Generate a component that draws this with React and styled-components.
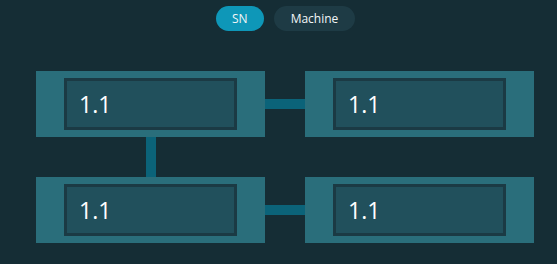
import React, { useState } from 'react';
import styled, { createGlobalStyle } from 'styled-components';

const GlobalStyle = createGlobalStyle`
    html, body {
        margin: 0;
        background: #152d35;
        font-family: "Open Sans", "Noto Sans", sans-serif;
    }
`;

const __nodes = ['1.1', '1.1', '1.1', '1.1'];

const App = () => {
    const [mode, setMode] = useState('SN');

    return (<Page>
        <GlobalStyle />
        <Toolbar>
            <Pill active={mode === 'SN'} onClick={() => setMode('SN')}>SN</Pill>
            <Pill active={mode === 'Machine'} onClick={() => setMode('Machine')}>Machine</Pill>
        </Toolbar>
        <Board>
            <Node><Label>{__nodes[0]}</Label></Node>
            <Cell><HLink /></Cell>
            <Node><Label>{__nodes[1]}</Label></Node>
            <Cell><VLink /></Cell>
            <Cell />
            <Cell />
            <Node><Label>{__nodes[2]}</Label></Node>
            <Cell><HLink /></Cell>
            <Node><Label>{__nodes[3]}</Label></Node>
        </Board>
    </Page>)
}

const Page = styled.div`
    display:flex;
    flex-direction:column;
    width:557px;
    height:264px;
    overflow:hidden;
`;

const Toolbar = styled.div`
    display:flex;
    gap:10px;
    padding:6px 0 0 216px;
`;

const Pill = styled.button`
    height:25px;
    padding:0 ${props => props.active ? "16px" : "17px"};
    border:none;
    border-radius:13px;
    background:${props => props.active ? "#0e97b8" : "#1e3b45"};
    color:#f2f6f7;
    font-family:"Open Sans", "Noto Sans", sans-serif;
    font-size:12px;
    line-height:25px;
    cursor:pointer;
`;

const Board = styled.div`
    display:grid;
    grid-template-columns:229px 40px 229px;
    grid-template-rows:66px 40px 66px;
    margin:40px 0 0 36px;
`;

const Cell = styled.div`
    display:flex;
    align-items:center;
    justify-content:center;
`;

const Node = styled.div`
    background:#2a6e7b;
    padding:7px 28px;
    box-sizing:border-box;
    display:flex;
`;

const Label = styled.div`
    flex:1;
    display:flex;
    align-items:center;
    padding:0 0 1px 12px;
    background:#21505c;
    border:3px solid #1b3a44;
    color:#ffffff;
    font-size:23px;
`;

const HLink = styled.div`
    width:100%;
    height:10px;
    background:#0b6379;
`;

const VLink = styled.div`
    width:10px;
    height:100%;
    background:#0b6379;
`;

export default App;
